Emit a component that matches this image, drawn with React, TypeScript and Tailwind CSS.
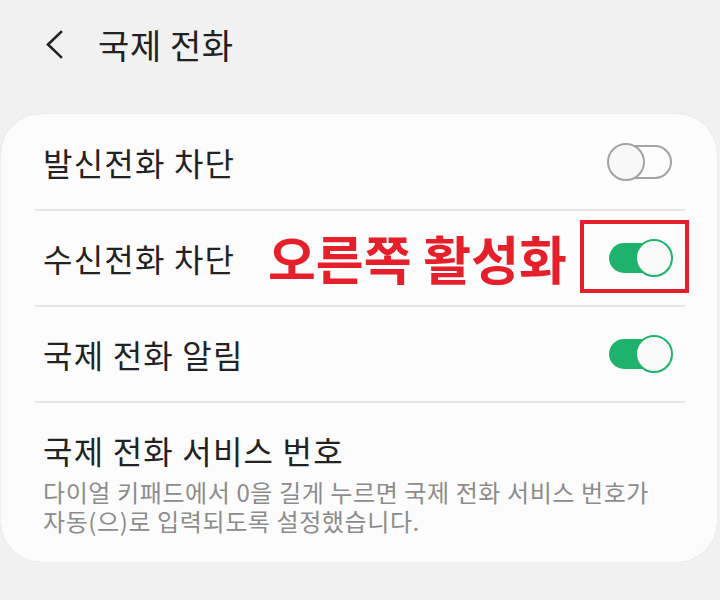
import React from "react";

const font = { fontFamily: '"Noto Sans CJK KR", "Noto Sans", sans-serif' };

function ToggleOn() {
  return (
    <div className="relative w-[66px] h-[40px] shrink-0">
      <div className="absolute left-[2px] top-[5px] w-[56px] h-[30px] rounded-full bg-[#1fb26c]" />
      <div className="absolute right-0 top-[1px] w-[38px] h-[38px] rounded-full bg-[#fafafa] border-2 border-[#1fb26c]" />
    </div>
  );
}

function ToggleOff() {
  return (
    <div className="relative w-[66px] h-[40px] shrink-0">
      <div className="absolute left-[1px] right-[1px] top-[3px] h-[34px] rounded-full border-2 border-[#a3a3a3]" />
      <div className="absolute left-0 top-[1px] w-[38px] h-[38px] rounded-full bg-[#f8f8f8] border-2 border-[#a3a3a3]" />
    </div>
  );
}

export default function App() {
  return (
    <div className="w-[720px] h-[600px] bg-[#f1f1f1] relative overflow-hidden" style={font}>
      <div className="h-[90px] flex items-center">
        <svg width="20" height="32" viewBox="0 0 20 32" className="ml-[44px]">
          <path d="M17 3 L4 15.5 L17 28" fill="none" stroke="#222" strokeWidth="2.6" strokeLinecap="square" />
        </svg>
        <div className="ml-[34px] text-[34px] leading-[40px] tracking-[0.6px] text-[#222]">국제 전화</div>
      </div>
      <div className="mt-[24px] ml-px w-[716px] h-[448px] bg-[#fcfcfc] rounded-[40px] shadow-[0_0_1px_rgba(0,0,0,0.15)] flex flex-col">
        <div className="pl-[34px] pr-[32px]">
          <div className="h-[97px] border-b-2 border-[#e6e6e6] flex items-center pl-[8px] pr-[12px]">
            <div className="flex-1 text-[32px] tracking-[1.2px] text-[#222]">발신전화 차단</div>
            <ToggleOff />
          </div>
        </div>
        <div className="pl-[34px] pr-[32px]">
          <div className="relative h-[96px] border-b-2 border-[#e6e6e6] flex items-center pl-[8px] pr-[12px]">
            <div className="flex-1 text-[32px] tracking-[1.2px] text-[#222]">수신전화 차단</div>
            <div className="absolute left-[233px] top-[19px] text-[52px] leading-[56px] font-bold text-[#e5202a]">
              오른쪽 활성화
            </div>
            <div className="absolute left-[545px] top-[9px] w-[109px] h-[73px] border-[4px] border-[#e5202a]" />
            <ToggleOn />
          </div>
        </div>
        <div className="pl-[34px] pr-[32px]">
          <div className="h-[96px] border-b-2 border-[#e6e6e6] flex items-center pl-[8px] pr-[12px]">
            <div className="flex-1 text-[32px] tracking-[1.2px] text-[#222]">국제 전화 알림</div>
            <ToggleOn />
          </div>
        </div>
        <div className="px-[42px] pt-[27px]">
          <div className="text-[32px] leading-[40px] tracking-[1.2px] text-[#222]">국제 전화 서비스 번호</div>
          <div className="mt-[7px] text-[24px] tracking-[0.6px] text-[#8c8c8c]">
            <div className="leading-[29px]">다이얼 키패드에서 0을 길게 누르면 국제 전화 서비스 번호가</div>
            <div className="leading-[29px]">자동(으)로 입력되도록 설정했습니다.</div>
          </div>
        </div>
      </div>
    </div>
  );
}
